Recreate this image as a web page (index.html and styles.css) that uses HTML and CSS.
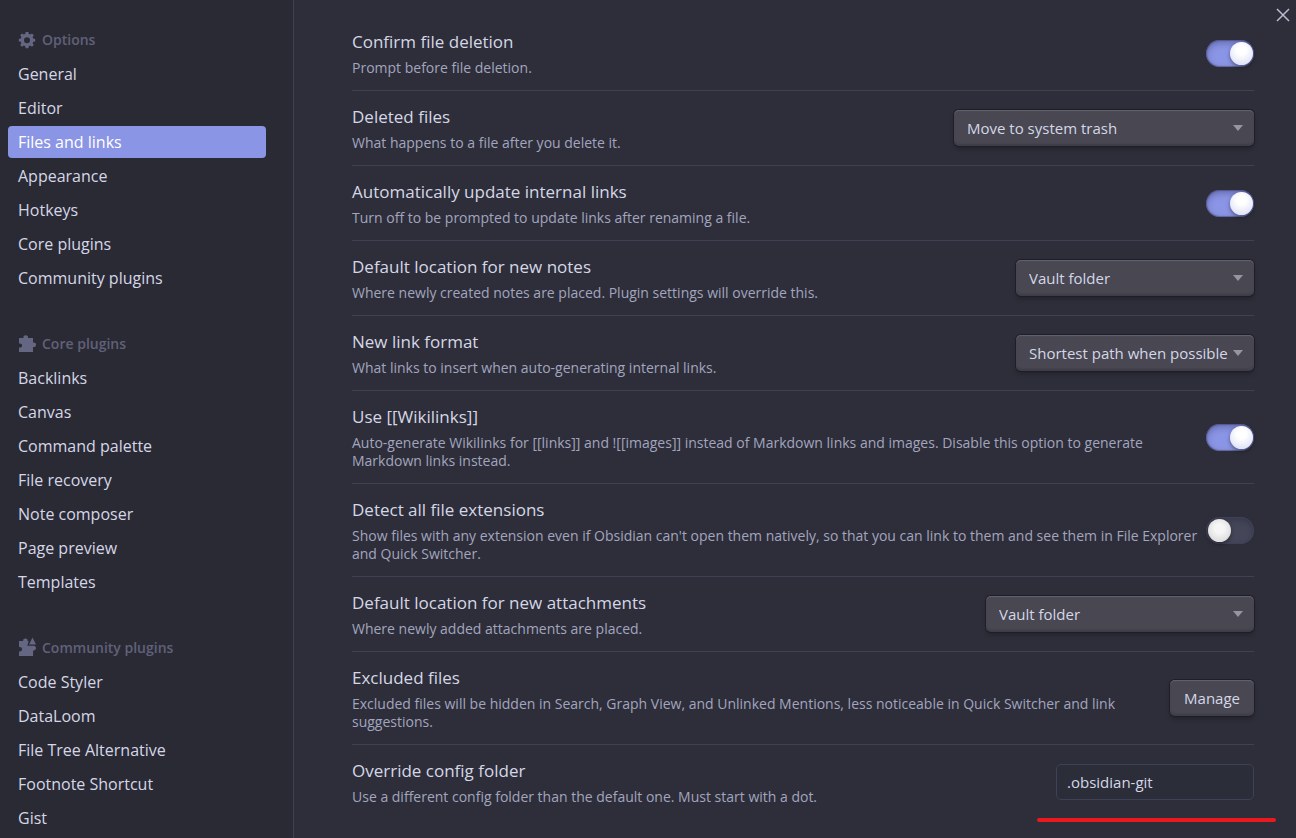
FILE: index.html
```html
<!DOCTYPE html>
<html lang="en">
<head>
<meta charset="utf-8">
<title>Settings</title>
<link rel="stylesheet" href="styles.css">
</head>
<body>
<div class="settings">
  <nav class="sidebar" aria-label="Settings sections">
    <section class="group">
      <h2 class="group-title">
        <svg class="group-icon" viewBox="0 0 18 18" aria-hidden="true"><path fill-rule="evenodd" d="M7.600 1h2.800l.4 2 1.400.6L14 2.500 15.800 4.300l-1.200 1.700.6 1.500 2 .4v2.500l-2 .400-.6 1.400 1.200 1.800-1.800 1.800-1.800-1.200-1.400.6-.4 2H7.600l-.4-2-1.400-.6L4 15.800 2.200 14l1.200-1.800-.6-1.400-2-.4V7.900l2-.4.6-1.500-1.200-1.700L4 2.500l1.800 1.100L7.200 3zM9 6.200a3 3 0 1 0 0 6A3 3 0 0 0 9 6.200z"/></svg>
        Options
      </h2>
      <a class="item" href="#general">General</a>
      <a class="item" href="#editor">Editor</a>
      <a class="item item-active" href="#files" aria-current="page">Files and links</a>
      <a class="item" href="#appearance">Appearance</a>
      <a class="item" href="#hotkeys">Hotkeys</a>
      <a class="item" href="#core">Core plugins</a>
      <a class="item" href="#community">Community plugins</a>
    </section>
    <section class="group">
      <h2 class="group-title">
        <svg class="group-icon" viewBox="0 0 18 18" aria-hidden="true"><path d="M1 3h4.500C5 1.200 6 .2 7.700.2S10.400 1.200 9.900 3H15v4.500c1.800-.4 3 .5 3 2.200s-1.200 2.700-3 2.200V17H1v-4.500c1.800.4 3.100-.4 3.100-2S2.800 8.200 1 8.600z"/></svg>
        Core plugins
      </h2>
      <a class="item" href="#backlinks">Backlinks</a>
      <a class="item" href="#canvas">Canvas</a>
      <a class="item" href="#palette">Command palette</a>
      <a class="item" href="#recovery">File recovery</a>
      <a class="item" href="#composer">Note composer</a>
      <a class="item" href="#preview">Page preview</a>
      <a class="item" href="#templates">Templates</a>
    </section>
    <section class="group">
      <h2 class="group-title">
        <svg class="group-icon" viewBox="0 0 18 18" aria-hidden="true"><path d="M1 2h4.200C4.700.5 5.800-.6 7.400-.6S10 .5 9.600 2h1L9.300 6.800H15c1.800-.4 3 .6 3 2.300s-1.200 2.700-2.900 2.400V17H1v-4.600c1.800.4 3-.5 3-2.100S2.800 7.800 1 8.200z"/><path d="M14.500-1.400l3.500 7h-7z"/></svg>
        Community plugins
      </h2>
      <a class="item" href="#styler">Code Styler</a>
      <a class="item" href="#dataloom">DataLoom</a>
      <a class="item" href="#filetree">File Tree Alternative</a>
      <a class="item" href="#footnote">Footnote Shortcut</a>
      <a class="item" href="#gist">Gist</a>
    </section>
  </nav>

  <main class="content">
    <button class="close" type="button" aria-label="Close">
      <svg viewBox="0 0 14 14" aria-hidden="true"><path d="M1 1l12 12M13 1L1 13"/></svg>
    </button>

    <div class="row">
      <div class="info">
        <label class="name" for="confirm">Confirm file deletion</label>
        <p class="desc">Prompt before file deletion.</p>
      </div>
      <input class="toggle" type="checkbox" id="confirm" checked>
    </div>
    <div class="row">
      <div class="info">
        <label class="name" for="deleted">Deleted files</label>
        <p class="desc">What happens to a file after you delete it.</p>
      </div>
      <div class="dropdown dropdown-xl"><select id="deleted"><option>Move to system trash</option></select></div>
    </div>
    <div class="row">
      <div class="info">
        <label class="name" for="update">Automatically update internal links</label>
        <p class="desc">Turn off to be prompted to update links after renaming a file.</p>
      </div>
      <input class="toggle" type="checkbox" id="update" checked>
    </div>
    <div class="row">
      <div class="info">
        <label class="name" for="notes">Default location for new notes</label>
        <p class="desc">Where newly created notes are placed. Plugin settings will override this.</p>
      </div>
      <div class="dropdown"><select id="notes"><option>Vault folder</option></select></div>
    </div>
    <div class="row">
      <div class="info">
        <label class="name" for="format">New link format</label>
        <p class="desc">What links to insert when auto-generating internal links.</p>
      </div>
      <div class="dropdown"><select id="format"><option>Shortest path when possible</option></select></div>
    </div>
    <div class="row">
      <div class="info">
        <label class="name" for="wikilinks">Use [[Wikilinks]]</label>
        <p class="desc">Auto-generate Wikilinks for [[links]] and ![[images]] instead of Markdown links and images. Disable this option to generate Markdown links instead.</p>
      </div>
      <input class="toggle" type="checkbox" id="wikilinks" checked>
    </div>
    <div class="row">
      <div class="info">
        <label class="name" for="extensions">Detect all file extensions</label>
        <p class="desc">Show files with any extension even if Obsidian can't open them natively, so that you can link to them and see them in File Explorer and Quick Switcher.</p>
      </div>
      <input class="toggle" type="checkbox" id="extensions">
    </div>
    <div class="row">
      <div class="info">
        <label class="name" for="attachments">Default location for new attachments</label>
        <p class="desc">Where newly added attachments are placed.</p>
      </div>
      <div class="dropdown dropdown-l"><select id="attachments"><option>Vault folder</option></select></div>
    </div>
    <div class="row">
      <div class="info">
        <div class="name">Excluded files</div>
        <p class="desc">Excluded files will be hidden in Search, Graph View, and Unlinked Mentions, less noticeable in Quick Switcher and link suggestions.</p>
      </div>
      <button class="button" type="button">Manage</button>
    </div>
    <div class="row">
      <div class="info">
        <label class="name" for="config">Override config folder</label>
        <p class="desc">Use a different config folder than the default one. Must start with a dot.</p>
      </div>
      <div class="field field-marked"><input class="text" type="text" id="config" value=".obsidian-git"></div>
    </div>
  </main>
</div>
</body>
</html>
```
FILE: styles.css
```css
* {
  box-sizing: border-box;
}

body {
  margin: 0;
  background: #2d2e39;
  color: #d5d7e6;
  font-family: "Open Sans", "Noto Sans", sans-serif;
  font-size: 16px;
}

.settings {
  display: grid;
  grid-template-columns: 294px 1fr;
  height: 100vh;
  overflow: hidden;
}

.sidebar {
  display: flex;
  flex-direction: column;
  gap: 34px;
  padding: 24px 27px 0 8px;
  overflow: hidden;
  background: #2a2a35;
  border-right: 1px solid #3f4152;
}

.group {
  display: flex;
  flex-direction: column;
  gap: 2px;
}

.group-title {
  display: flex;
  align-items: center;
  gap: 6px;
  margin: 0;
  padding: 0 10px;
  color: #606179;
  font-size: 14px;
  font-weight: 600;
  line-height: 32px;
}

.group-icon {
  width: 18px;
  height: 18px;
  overflow: visible;
  fill: #656681;
}

.item {
  padding: 0 10px;
  border-radius: 4px;
  color: #d5d7e6;
  line-height: 32px;
  text-decoration: none;
}

.item-active {
  background: #8b95e5;
  color: #fff;
}

.content {
  position: relative;
  padding: 16px 42px 0 58px;
  overflow: hidden;
}

.close {
  position: absolute;
  top: 8px;
  right: 6px;
  width: 14px;
  height: 14px;
  padding: 0;
  border: 0;
  background: none;
}

.close svg {
  display: block;
  fill: none;
  stroke: #b9bbcf;
  stroke-width: 1.5;
}

.row {
  display: flex;
  align-items: center;
  gap: 4px;
  padding: 12px 0;
  border-bottom: 1px solid #3f4152;
}

.row:last-child {
  border-bottom: 0;
}

.info {
  flex: 1;
  padding-bottom: 1px;
}

.name {
  display: block;
  font-size: 17px;
  line-height: 28px;
}

.desc {
  margin: 3px 0 0;
  color: #a3a5bf;
  font-size: 14px;
  line-height: 18px;
}

.toggle {
  flex: none;
  appearance: none;
  width: 48px;
  height: 27px;
  margin: 0;
  padding: 2px;
  border-radius: 14px;
  background: #454759;
  box-shadow: inset 0 0 0 1px #3f4158, inset 0 3px 7px rgba(30, 30, 50, 0.4);
}

.toggle::before {
  content: "";
  display: block;
  width: 23px;
  height: 23px;
  border-radius: 50%;
  background: radial-gradient(circle at 50% 42%, #f6f6f6 25%, #cfcfcf 100%);
  box-shadow: 0 2px 4px rgba(0, 0, 0, 0.4);
}

.toggle:checked {
  background: #8b95e5;
  box-shadow: inset 0 0 1px 1px rgba(60, 60, 90, 0.5), inset 0 3px 7px rgba(40, 40, 90, 0.4);
}

.toggle:checked::before {
  margin-left: 22px;
  background: radial-gradient(circle at 50% 35%, #fff 25%, #d3d7f4 100%);
}

.dropdown {
  position: relative;
  flex: none;
  width: 238px;
}

.dropdown-l {
  width: 268px;
}

.dropdown-xl {
  width: 300px;
}

.dropdown::after {
  content: "";
  position: absolute;
  top: 15px;
  right: 11px;
  border: 5px solid transparent;
  border-top: 6px solid #96969f;
  border-bottom: 0;
  pointer-events: none;
}

.dropdown select,
.button {
  height: 36px;
  padding: 0 14px;
  border: 0;
  border-radius: 5px;
  background: #484752;
  box-shadow: 0 0 0 1px #1e1e29, 0 3px 4px rgba(0, 0, 0, 0.25), inset 0 1px 1px #64636d, inset 0 -2px 2px rgba(30, 30, 40, 0.25);
  color: #d5d7e6;
  font-family: inherit;
  font-size: 15px;
}

.dropdown select {
  display: block;
  appearance: none;
  width: 100%;
  padding: 0 13px;
}

.field {
  position: relative;
  width: 198px;
}

.text {
  display: block;
  width: 100%;
  height: 36px;
  padding: 0 10px;
  border: 1px solid #3f4158;
  border-radius: 5px;
  background: #2b2d38;
  color: #d5d7e6;
  font-family: inherit;
  font-size: 15px;
}

.field-marked::after {
  content: "";
  position: absolute;
  top: 54px;
  right: -22px;
  left: -19px;
  height: 4px;
  border-radius: 2px;
  background: #ea191d;
}
```
